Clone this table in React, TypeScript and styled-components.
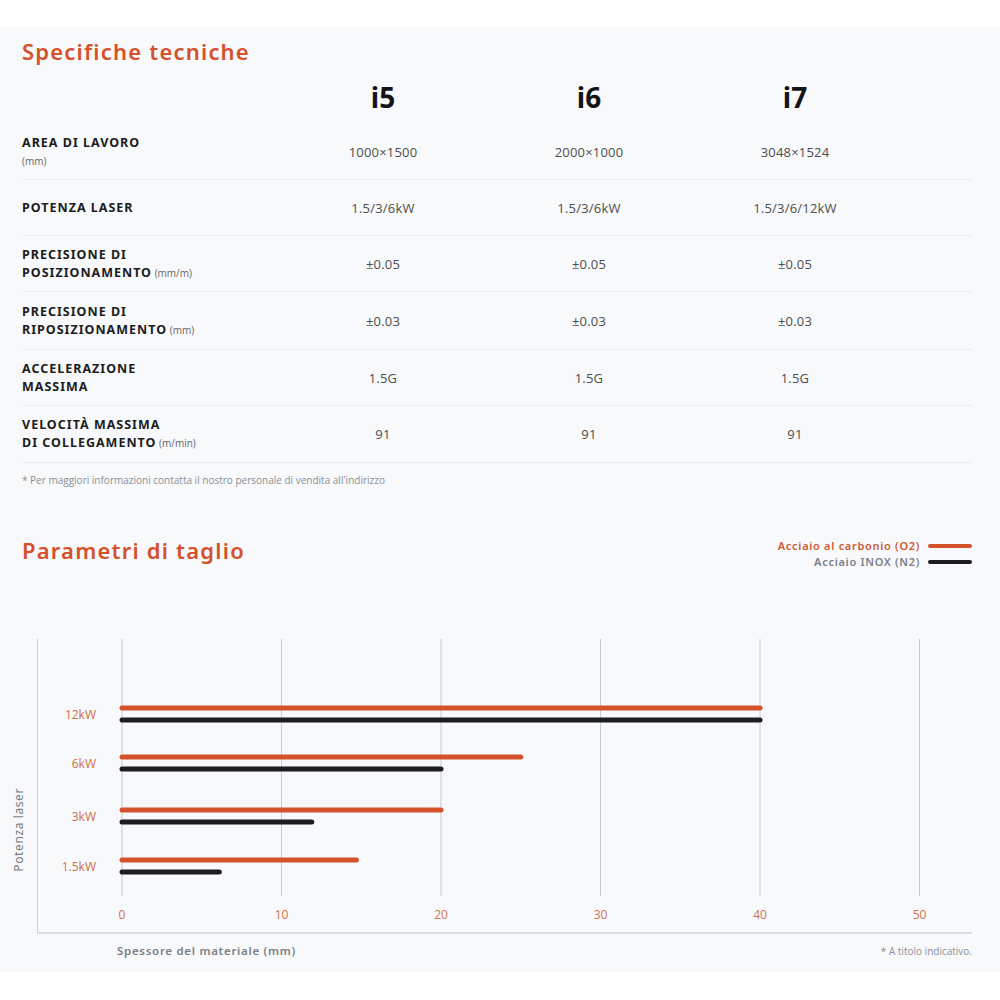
import React from "react";
import styled, { createGlobalStyle } from "styled-components";

const Global = createGlobalStyle`
  html, body { margin: 0; padding: 0; background: #ffffff; }
  body { font-family: "Open Sans", "Noto Sans", sans-serif; }
`;

const ORANGE = "#d5512b";
const DARK = "#1d1d1f";

const Page = styled.div`
  padding-top: 27px;
  width: 1000px;
`;

const Panel = styled.section`
  background: #f7f9fb;
  padding: 0 28px 0 22px;
  height: 945px;
  box-sizing: border-box;
  display: flex;
  flex-direction: column;
`;

const Title = styled.h2<{ $mt: number }>`
  margin: ${(p) => p.$mt}px 0 0;
  font-family: "Noto Sans", sans-serif;
  font-weight: 600;
  font-size: 22px;
  letter-spacing: 1.2px;
  color: ${ORANGE};
  line-height: 26px;
`;

const Table = styled.div`
  display: grid;
  grid-template-columns: 258px 206px 206px 206px 1fr;
`;

const HeadCell = styled.div`
  height: 61px;
  padding-top: 4px;
  box-sizing: border-box;
  display: flex;
  align-items: center;
  justify-content: center;
  font-family: "Noto Sans", sans-serif;
  font-weight: 700;
  font-size: 28px;
  color: #141414;
`;

const Row = styled.div<{ $h: number }>`
  display: contents;
  & > div {
    height: ${(p) => p.$h}px;
    box-sizing: border-box;
    border-bottom: 1px solid #e9ecef;
  }
`;

const Label = styled.div`
  display: flex;
  flex-direction: column;
  justify-content: center;
  font-family: "Noto Sans", sans-serif;
  font-weight: 700;
  font-size: 12.5px;
  line-height: 18px;
  color: #1c1c1c;
  letter-spacing: 1px;
`;

const Unit = styled.span`
  font-family: "Open Sans", sans-serif;
  font-weight: 400;
  font-size: 10px;
  color: #666;
  letter-spacing: 0;
`;

const Value = styled.div`
  display: flex;
  align-items: center;
  justify-content: center;
  font-family: "Open Sans", sans-serif;
  font-size: 13px;
  letter-spacing: 0.2px;
  color: #4d4d4d;
`;

const Filler = styled.div``;

const Note = styled.p`
  margin: 10px 0 0;
  font-family: "Open Sans", sans-serif;
  font-size: 10px;
  color: #8a8f96;
`;

const ChartHeader = styled.div`
  display: flex;
  justify-content: space-between;
  align-items: flex-start;
  margin-top: 50px;
`;

const Legend = styled.div`
  display: flex;
  flex-direction: column;
  align-items: flex-end;
  gap: 2px;
  margin-top: 2px;
`;

const LegendItem = styled.div<{ $color: string }>`
  display: flex;
  align-items: center;
  gap: 8px;
  font-family: "Noto Sans", sans-serif;
  font-weight: 600;
  font-size: 11px;
  letter-spacing: 0.7px;
  line-height: 14px;
  color: ${(p) => p.$color};
`;

const LegendLine = styled.span<{ $color: string }>`
  width: 44px;
  height: 4px;
  border-radius: 2px;
  background: ${(p) => p.$color};
`;

const ChartRow = styled.div`
  display: flex;
  margin-top: 70px;
  margin-left: -22px;
`;

const AxisTitle = styled.div`
  width: 37px;
  display: flex;
  justify-content: center;
  align-items: flex-end;
  padding-bottom: 62px;
  box-sizing: border-box;
  & > span {
    writing-mode: vertical-rl;
    transform: rotate(180deg);
    font-family: "Noto Sans", sans-serif;
    font-size: 12px;
    color: #777c83;
    letter-spacing: 0.6px;
  }
`;

const Frame = styled.div`
  width: 935px;
  height: 295px;
  border-left: 1px solid #c9ced4;
  border-bottom: 2px solid #d9dde2;
  box-sizing: border-box;
  & > svg { display: block; }
`;

const ChartFooter = styled.div`
  display: flex;
  justify-content: space-between;
  align-items: center;
  padding-left: 95px;
  margin-top: 9px;
`;

const AxisLabel = styled.span`
  font-family: "Noto Sans", sans-serif;
  font-weight: 600;
  font-size: 11.5px;
  letter-spacing: 0.7px;
  color: #7a7f86;
`;

const SmallNote = styled.span`
  font-family: "Open Sans", sans-serif;
  font-size: 10px;
  color: #8a8f96;
`;

const specs = [
  { label: ["AREA DI LAVORO"], unit: "(mm)", unitBelow: true, v: ["1000×1500", "2000×1000", "3048×1524"], h: 55 },
  { label: ["POTENZA LASER"], v: ["1.5/3/6kW", "1.5/3/6kW", "1.5/3/6/12kW"], h: 56 },
  { label: ["PRECISIONE DI", "POSIZIONAMENTO"], unit: "(mm/m)", v: ["±0.05", "±0.05", "±0.05"], h: 56 },
  { label: ["PRECISIONE DI", "RIPOSIZIONAMENTO"], unit: "(mm)", v: ["±0.03", "±0.03", "±0.03"], h: 58 },
  { label: ["ACCELERAZIONE", "MASSIMA"], v: ["1.5G", "1.5G", "1.5G"], h: 56 },
  { label: ["VELOCITÀ MASSIMA", "DI COLLEGAMENTO"], unit: "(m/min)", v: ["91", "91", "91"], h: 57 },
];

const bars = [
  { label: "12kW", o: 40, n: 40 },
  { label: "6kW", o: 25, n: 20 },
  { label: "3kW", o: 20, n: 11.9 },
  { label: "1.5kW", o: 14.7, n: 6.1 },
];

const X0 = 84;
const UNIT = 15.95;

const Chart = () => (
  <svg width="934" height="293" viewBox="0 0 934 293">
    {[0, 10, 20, 30, 40, 50].map((t) => (
      <g key={t}>
        <line x1={X0 + t * UNIT} x2={X0 + t * UNIT} y1={0} y2={257} stroke="#c6ccd3" strokeWidth="1" />
        <text x={X0 + t * UNIT} y={280} textAnchor="middle" fontFamily="Open Sans, sans-serif" fontSize="12" fill="#d0714f">
          {t}
        </text>
      </g>
    ))}
    {bars.map((b, i) => {
      const yo = [69, 118, 171, 221][i];
      return (
        <g key={b.label}>
          <text x={58} y={yo + 11} textAnchor="end" fontFamily="Open Sans, sans-serif" fontSize="12" fill="#cf6f4c">
            {b.label}
          </text>
          <line x1={X0} x2={X0 + b.o * UNIT} y1={yo} y2={yo} stroke={ORANGE} strokeWidth="5" strokeLinecap="round" />
          <line x1={X0} x2={X0 + b.n * UNIT} y1={yo + 12} y2={yo + 12} stroke={DARK} strokeWidth="5" strokeLinecap="round" />
        </g>
      );
    })}
  </svg>
);

export default function App() {
  return (
    <Page>
      <Global />
      <Panel>
        <Title $mt={11}>Specifiche tecniche</Title>
        <Table>
          <Filler />
          <HeadCell>i5</HeadCell>
          <HeadCell>i6</HeadCell>
          <HeadCell>i7</HeadCell>
          <Filler />
          {specs.map((s, i) => (
            <Row key={i} $h={s.h}>
              <Label>
                {s.label.map((l, j) => (
                  <div key={j}>
                    {l}
                    {s.unit && !s.unitBelow && j === s.label.length - 1 ? <Unit> {s.unit}</Unit> : null}
                  </div>
                ))}
                {s.unitBelow ? <Unit>{s.unit}</Unit> : null}
              </Label>
              {s.v.map((v, j) => (
                <Value key={j}>{v}</Value>
              ))}
              <Filler />
            </Row>
          ))}
        </Table>
        <Note>* Per maggiori informazioni contatta il nostro personale di vendita all'indirizzo</Note>
        <ChartHeader>
          <Title $mt={0}>Parametri di taglio</Title>
          <Legend>
            <LegendItem $color="#cf5a34">
              Acciaio al carbonio (O2) <LegendLine $color={ORANGE} />
            </LegendItem>
            <LegendItem $color="#7b8088">
              Acciaio INOX (N2) <LegendLine $color={DARK} />
            </LegendItem>
          </Legend>
        </ChartHeader>
        <ChartRow>
          <AxisTitle>
            <span>Potenza laser</span>
          </AxisTitle>
          <Frame>
            <Chart />
          </Frame>
        </ChartRow>
        <ChartFooter>
          <AxisLabel>Spessore del materiale (mm)</AxisLabel>
          <SmallNote>* A titolo indicativo.</SmallNote>
        </ChartFooter>
      </Panel>
    </Page>
  );
}
